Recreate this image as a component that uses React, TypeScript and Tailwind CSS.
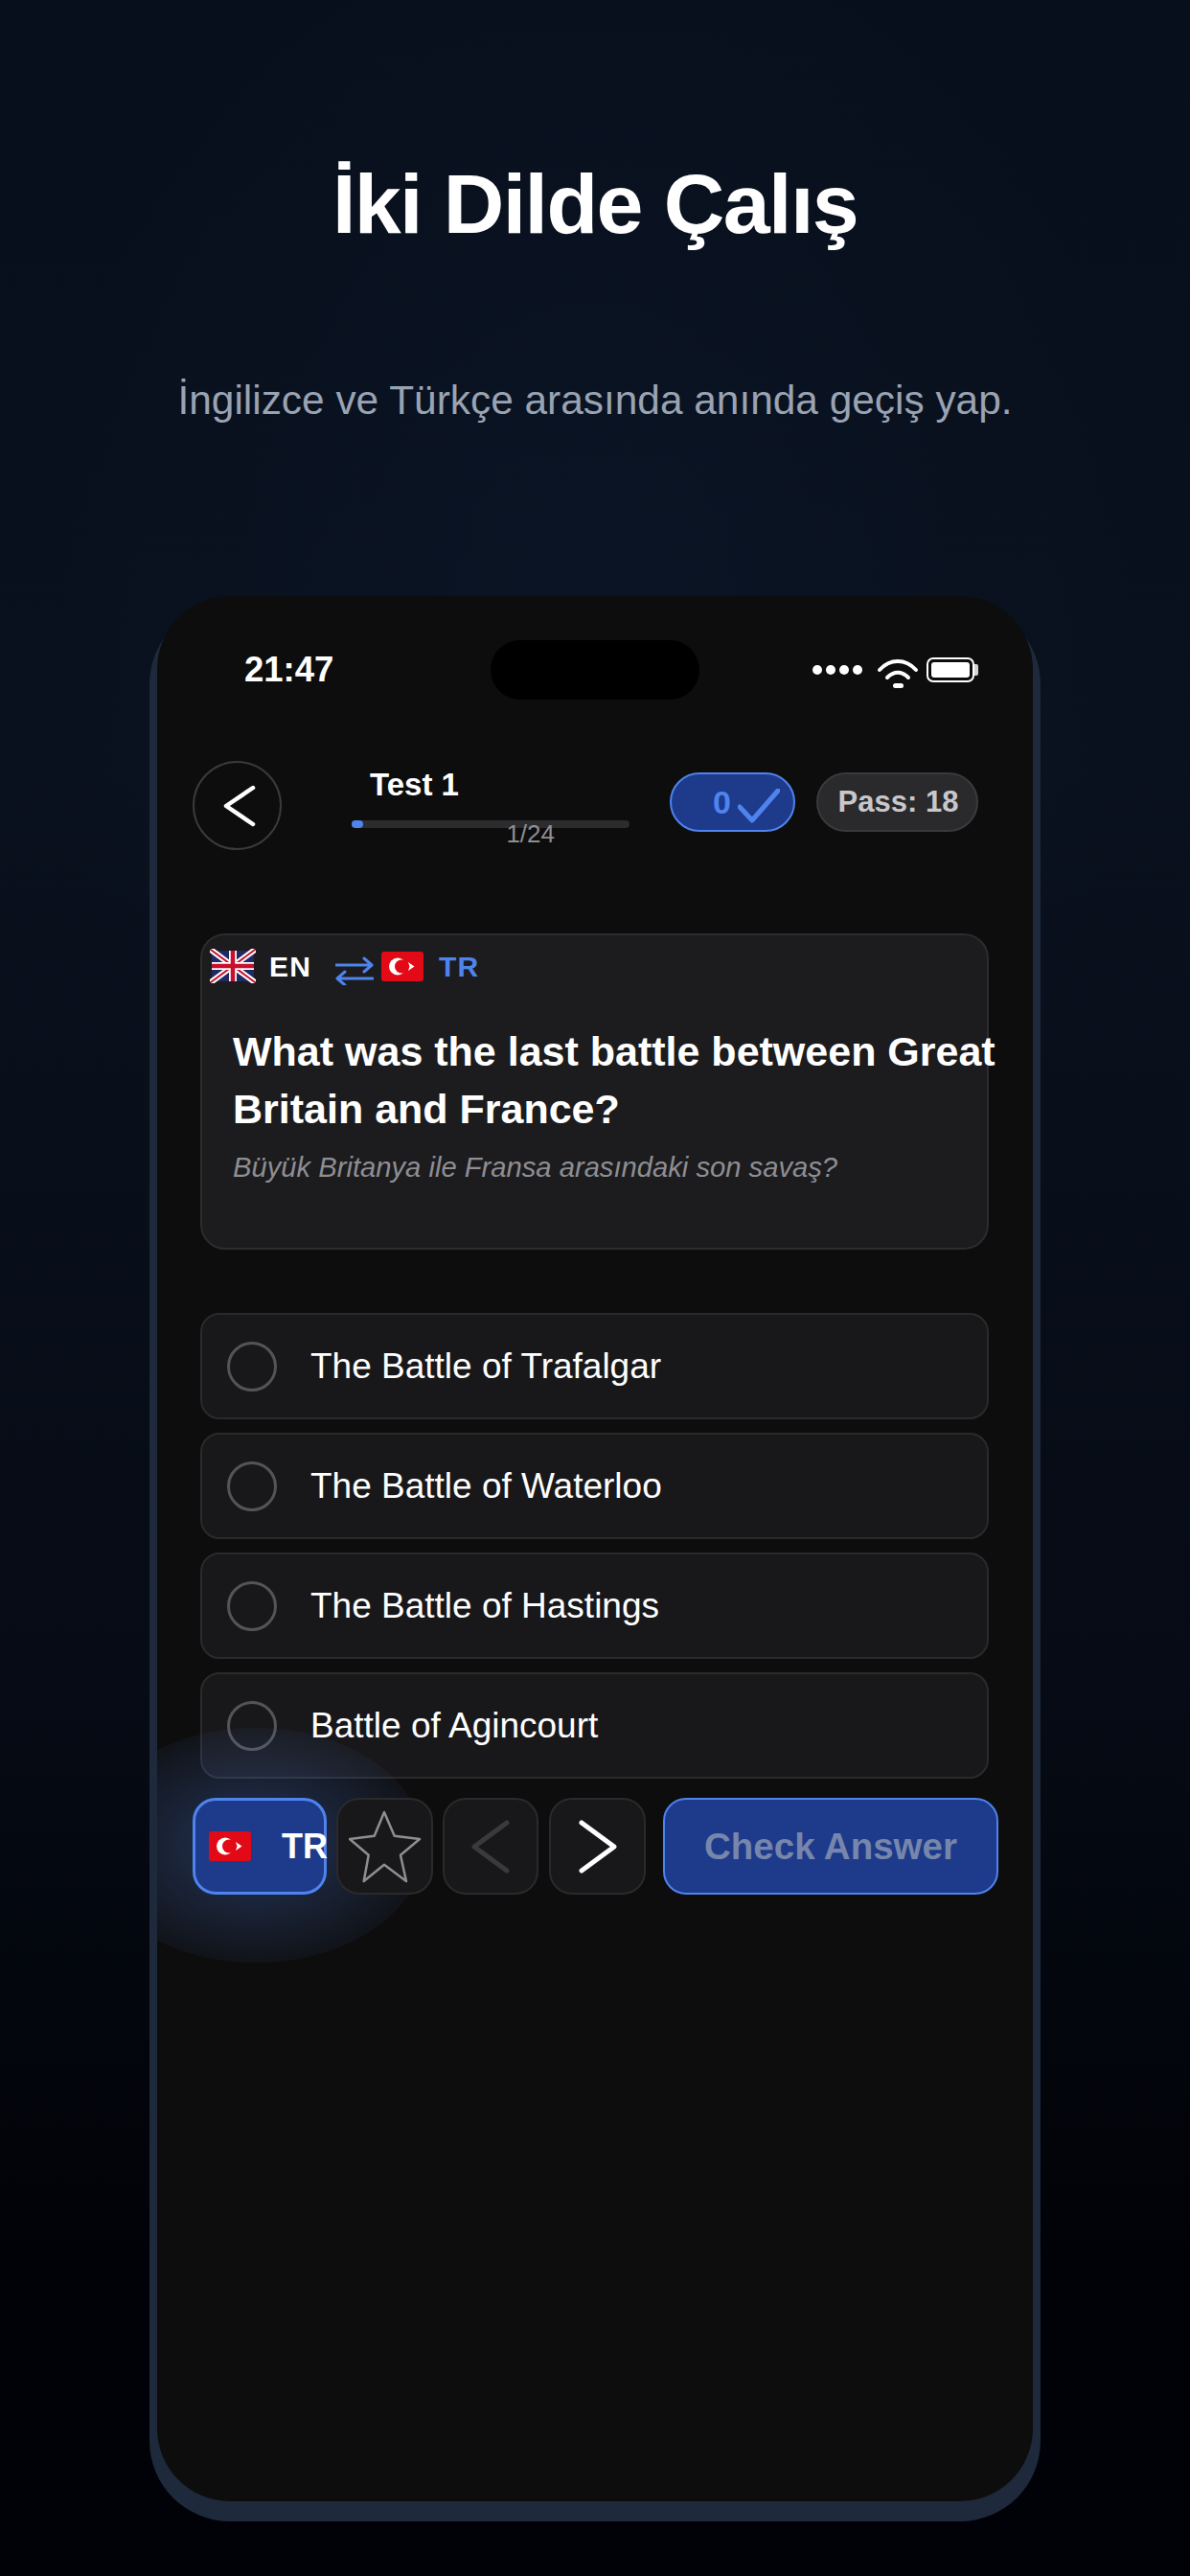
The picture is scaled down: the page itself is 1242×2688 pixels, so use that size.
const options = [
  "The Battle of Trafalgar",
  "The Battle of Waterloo",
  "The Battle of Hastings",
  "Battle of Agincourt",
];

function UkFlag() {
  return (
    <svg width="48" height="36" viewBox="0 0 48 36" className="shrink-0">
      <rect x="2" y="2" width="44" height="32" fill="#1f2a63" />
      <path d="M1 1 47 35M47 1 1 35" stroke="#fff" strokeWidth="6" />
      <path d="M1 1 47 35M47 1 1 35" stroke="#c8102e" strokeWidth="2" />
      <path d="M24 2V34M2 18H46" stroke="#fff" strokeWidth="8" />
      <path d="M24 2V34M2 18H46" stroke="#c8102e" strokeWidth="4.5" />
    </svg>
  );
}

function TrFlag() {
  return (
    <svg width="44" height="31" viewBox="0 0 44 31" className="shrink-0">
      <rect width="44" height="31" rx="3" fill="#e30a17" />
      <circle cx="17" cy="15.5" r="9" fill="#fff" />
      <circle cx="21" cy="15.5" r="7" fill="#e30a17" />
      <path d="M28 11 34.5 15.5 28 20 29.5 15.5Z" fill="#fff" />
    </svg>
  );
}

function Chevron({ dir, color, w, h, stroke }: { dir: "left" | "right"; color: string; w: number; h: number; stroke: number }) {
  const d = dir === "left" ? `M${w - 3} 3 3 ${h / 2} ${w - 3} ${h - 3}` : `M3 3 ${w - 3} ${h / 2} 3 ${h - 3}`;
  return (
    <svg width={w} height={h} viewBox={`0 0 ${w} ${h}`} fill="none">
      <path d={d} stroke={color} strokeWidth={stroke} strokeLinecap="round" strokeLinejoin="round" />
    </svg>
  );
}

function StatusIcons() {
  return (
    <div className="flex items-center">
      <div className="flex gap-[4px]">
        {[0, 1, 2, 3].map((i) => (
          <div key={i} className="w-[10px] h-[10px] rounded-full bg-white" />
        ))}
      </div>
      <svg width="44" height="34" viewBox="0 0 44 34" fill="none" className="ml-[15px] mt-[6px]">
        <path d="M3 14C14 2 30 2 41 14" stroke="#fff" strokeWidth="4" strokeLinecap="round" />
        <path d="M11 22C18 15 26 15 33 22" stroke="#fff" strokeWidth="4" strokeLinecap="round" />
        <rect x="17" y="28" width="11" height="5" rx="2.5" fill="#fff" />
      </svg>
      <div className="ml-[8px] flex items-center">
        <div className="w-[50px] h-[26px] rounded-[7px] border-2 border-white p-[3px]">
          <div className="w-full h-full rounded-[3px] bg-white" />
        </div>
        <div className="w-[4px] h-[12px] bg-[#d4d4d4] rounded-r-[2px]" />
      </div>
    </div>
  );
}

export default function App() {
  return (
    <div className="relative w-[1242px] h-[2688px] overflow-hidden bg-[radial-gradient(ellipse_45%_30%_at_50%_24%,#0a1424_0%,transparent_100%),linear-gradient(180deg,#080f1c_0%,#0a111e_30%,#060b15_65%,#010207_88%,#010207_100%)] font-['Liberation_Sans',Arial,sans-serif]">
      {/* Heading */}
      <div className="pt-[163px] text-center">
        <h1 className="text-[88px] leading-[100px] font-bold tracking-[-1.6px] text-white">İki Dilde Çalış</h1>
        <p className="mt-[129px] text-[42.4px] leading-[52px] text-[#9aa3b2]">İngilizce ve Türkçe arasında anında geçiş yap.</p>
      </div>

      {/* Phone */}
      <div className="mt-[186px] ml-[156px] w-[930px] rounded-[84px] bg-[#1e293b] px-[8px] pb-[21px]">
        <div className="relative -top-[8px] -mb-[8px] h-[1988px] rounded-[76px] bg-[#0d0d0d] overflow-hidden">
          {/* Status bar */}
          <div className="flex items-center justify-between h-[62px] mt-[46px] pl-[91px] pr-[57px] relative">
            <span className="text-[36.5px] font-bold text-white">21:47</span>
            <div className="absolute left-[348px] top-0 w-[218px] h-[62px] rounded-[31px] bg-black" />
            <StatusIcons />
          </div>

          {/* Header */}
          <div className="flex items-start mt-[64px] pl-[37px]">
            <button className="w-[93px] h-[93px] shrink-0 rounded-full border-2 border-[#3a3a3c] flex items-center justify-center pl-[4px]">
              <Chevron dir="left" color="#fff" w={34} h={44} stroke={4.5} />
            </button>
            <div className="ml-[73px] w-[290px] shrink-0">
              <div className="ml-[19px] mt-[6px] h-[38px] text-[33px] leading-[38px] font-bold text-white">Test 1</div>
              <div className="mt-[18px] h-[8px] rounded-full bg-[#2c2c2e]">
                <div className="w-[12px] h-[8px] rounded-full bg-[#4f83ee]" />
              </div>
              <div className="-mt-[9px] pr-[78px] text-right text-[26px] leading-[30px] text-[#8e8e93]">1/24</div>
            </div>
            <div className="ml-[42px] mt-[12px] w-[131px] h-[62px] shrink-0 rounded-[31px] bg-[#1e3a8a] border-2 border-[#4f83ee] flex items-center justify-end pr-[14px] gap-[7px]">
              <span className="text-[34px] font-bold text-[#4f83ee]">0</span>
              <svg width="44" height="36" viewBox="0 0 44 36" fill="none" className="mt-[8px]">
                <path d="M2 19 15 33 42 2" stroke="#4f83ee" strokeWidth="5" strokeLinecap="round" strokeLinejoin="round" />
              </svg>
            </div>
            <div className="ml-[22px] mt-[12px] w-[169px] h-[62px] shrink-0 rounded-[31px] bg-[#2a2a2c] border-2 border-[#3a3a3c] flex items-center justify-center pl-[2px] text-[31px] font-bold text-[#c7c7cc]">
              Pass: 18
            </div>
          </div>

          {/* Question card */}
          <div className="mt-[87px] ml-[45px] w-[823px] h-[330px] rounded-[26px] border-2 border-[#2c2c2e] bg-[#1c1c1e]">
            <div className="flex items-center h-[36px] mt-[14px] ml-[8px]">
              <UkFlag />
              <span className="ml-[14px] text-[30px] font-bold tracking-[1.2px] text-white">EN</span>
              <svg width="40" height="30" viewBox="0 0 40 30" fill="none" className="ml-[25px] mt-[10px] shrink-0">
                <path d="M1 9H37M30 2 38 9 30 16M39 23H3M10 16 2 23 10 30" stroke="#4f83ee" strokeWidth="3" strokeLinecap="round" strokeLinejoin="round" />
              </svg>
              <span className="ml-[8px]"><TrFlag /></span>
              <span className="ml-[16px] text-[30px] font-bold tracking-[1px] text-[#4f83ee]">TR</span>
            </div>
            <div className="ml-[32px] mt-[41px] w-[800px]">
              <div className="text-[43px] leading-[60px] font-bold text-white">What was the last battle between Great Britain and France?</div>
              <div className="mt-[12px] text-[29.2px] leading-[38px] italic text-[#8e8e93]">Büyük Britanya ile Fransa arasındaki son savaş?</div>
            </div>
          </div>

          {/* Options */}
          <div className="mt-[66px] ml-[45px] w-[823px] flex flex-col gap-[14px]">
            {options.map((o) => (
              <div key={o} className="h-[111px] rounded-[20px] border-2 border-[#2a2a2c] bg-[#18181a] flex items-center pl-[26px]">
                <div className="w-[52px] h-[52px] rounded-full border-[3px] border-[#545458] shrink-0" />
                <span className="ml-[35px] text-[37px] text-white">{o}</span>
              </div>
            ))}
          </div>

          {/* Glow behind the language button */}
          <div className="absolute -left-[73px] top-[1181px] w-[352px] h-[245px] rounded-[50%] bg-[radial-gradient(closest-side,rgba(80,130,235,0.34),rgba(80,130,235,0.05))]" />

          {/* Bottom actions */}
          <div className="relative flex mt-[20px] ml-[37px] h-[101px]">
            <button className="w-[140px] rounded-[24px] border-[3px] border-[#4f83ee] bg-[#1e3a8a] flex items-center pl-[14px]">
              <TrFlag />
              <span className="ml-[32px] text-[36px] font-bold text-white">TR</span>
            </button>
            <button className="ml-[10px] w-[101px] rounded-[24px] border-2 border-[#2a2a2c] bg-[#18181a] flex items-center justify-center">
              <svg width="76" height="76" viewBox="0 0 76 76" fill="none" stroke="#8e8e93" strokeWidth="2.5" strokeLinejoin="round">
                <path d="M37 2 47.7 26.7 74 30 54 46.7 60 74 37 56.7 15.7 74 20.7 46.7 1 30 26.7 26.7Z" />
              </svg>
            </button>
            <button className="ml-[10px] w-[100px] rounded-[24px] border-2 border-[#2a2a2c] bg-[#18181a] flex items-center justify-center">
              <Chevron dir="left" color="#3a3a3c" w={40} h={56} stroke={5} />
            </button>
            <button className="ml-[11px] w-[101px] rounded-[24px] border-2 border-[#2a2a2c] bg-[#18181a] flex items-center justify-center">
              <Chevron dir="right" color="#fff" w={40} h={56} stroke={5} />
            </button>
            <button className="ml-[18px] w-[350px] rounded-[24px] border-2 border-[#4f83ee] bg-[#1e3a8a] flex items-center justify-center text-[38.5px] font-bold text-[#7686ac]">
              Check Answer
            </button>
          </div>
        </div>
      </div>
    </div>
  );
}
